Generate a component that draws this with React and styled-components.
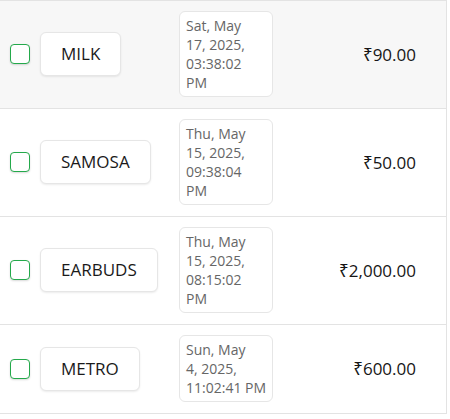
import React from "react";
import styled, { createGlobalStyle } from "styled-components";

const GlobalStyle = createGlobalStyle`
  body {
    margin: 0;
    background: #ffffff;
    font-family: "Open Sans", "Noto Sans", sans-serif;
  }
`;

const Table = styled.div`
  width: 446px;
  border-top: 1px solid #e3e3e3;
  border-right: 1px solid #e3e3e3;
`;

const Row = styled.div`
  display: grid;
  grid-template-columns: 40px 139px 94px 1fr;
  align-items: center;
  padding: 10px 0 11px;
  border-bottom: 1px solid #e3e3e3;
  background: ${props => (props.highlight ? "#f7f7f7" : "#ffffff")};
`;

const CheckCell = styled.div`
  display: flex;
  padding-left: 10px;
`;

const Checkbox = styled.span`
  display: block;
  width: 18px;
  height: 18px;
  border: 1px solid #24a94b;
  border-radius: 4px;
  background: #ffffff;
  box-shadow: 0 1px 2px rgba(0, 0, 0, 0.15);
`;

const NameCell = styled.div`
  display: flex;
`;

const NameButton = styled.div`
  padding: 10px 20px;
  line-height: 22px;
  font-size: 17px;
  font-weight: 500;
  color: #1a1a1a;
  background: #ffffff;
  border: 1px solid #e6e6e6;
  border-radius: 6px;
  box-shadow: 0 1px 2px rgba(0, 0, 0, 0.08);
`;

const DateBox = styled.div`
  padding: 4px 6px;
  font-size: 14px;
  line-height: 19px;
  color: #666666;
  background: #ffffff;
  border: 1px solid #e6e6e6;
  border-radius: 6px;
`;

const DateLine = styled.span`
  display: block;
  white-space: nowrap;
`;

const Price = styled.div`
  text-align: right;
  padding-right: 30px;
  font-size: 17px;
  color: #161616;
`;

const items = [
  { name: "MILK", date: ["Sat, May", "17, 2025,", "03:38:02", "PM"], price: "₹90.00", highlight: true },
  { name: "SAMOSA", date: ["Thu, May", "15, 2025,", "09:38:04", "PM"], price: "₹50.00" },
  { name: "EARBUDS", date: ["Thu, May", "15, 2025,", "08:15:02", "PM"], price: "₹2,000.00" },
  { name: "METRO", date: ["Sun, May", "4, 2025,", "11:02:41 PM"], price: "₹600.00" }
];

const App = () => (
  <>
    <GlobalStyle />
    <Table>
      {items.map(item => (
        <Row key={item.name} highlight={item.highlight}>
          <CheckCell>
            <Checkbox />
          </CheckCell>
          <NameCell>
            <NameButton>{item.name}</NameButton>
          </NameCell>
          <DateBox>
            {item.date.map(line => (
              <DateLine key={line}>{line}</DateLine>
            ))}
          </DateBox>
          <Price>{item.price}</Price>
        </Row>
      ))}
    </Table>
  </>
);

export default App;
